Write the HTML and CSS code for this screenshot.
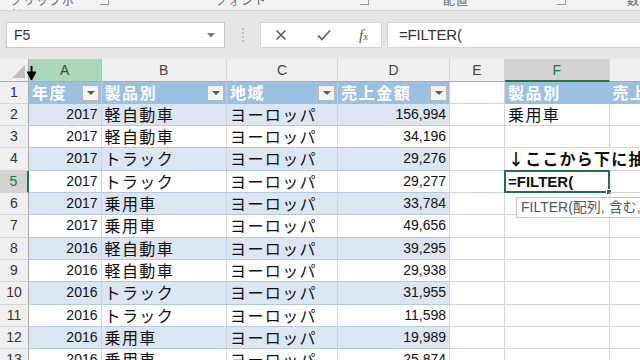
FILE: index.html
```html
<!DOCTYPE html>
<html lang="ja">
<head>
<meta charset="utf-8">
<link rel="stylesheet" href="styles.css">
</head>
<body>
<div class="ribbon">
  <span class="rl">クリップボード</span>
  <span class="rl"><span class="launch"></span></span>
  <span class="rl">フォント</span>
  <span class="rl"><span class="launch"></span></span>
  <span class="rl">配置</span>
  <span class="rl"><span class="launch"></span></span>
  <span class="rl">数</span>
</div>
<div class="fbar">
  <div class="namebox"><span>F5</span><svg class="dd" width="8" height="5" viewBox="0 0 8 5"><path d="M0 0h8L4 4.5z" fill="#777"/></svg></div>
  <div class="dots"><i></i><i></i><i></i><i></i></div>
  <div class="btns">
    <svg width="12" height="12" viewBox="0 0 12 12"><path d="M1.5 1.5l9 9M10.5 1.5l-9 9" stroke="#555" stroke-width="1.5"/></svg>
    <svg width="14" height="12" viewBox="0 0 14 12"><path d="M1 6.5l4 4L13 1.5" stroke="#666" stroke-width="1.8" fill="none"/></svg>
    <span class="fx">f<small>x</small></span>
  </div>
  <div class="finput">=FILTER(</div>
</div>
<div class="gap"></div>
<div class="sheetwrap">
<div class="sheet">
  <div class="corner"><span class="tri"></span></div>
  <div class="ch hov">A</div><div class="ch">B</div><div class="ch">C</div><div class="ch">D</div><div class="ch">E</div><div class="ch sel">F</div><div class="ch"></div>

  <div class="rh">1</div>
  <div class="c th">年度<span class="fb"></span></div><div class="c th">製品別<span class="fb"></span></div><div class="c th">地域<span class="fb"></span></div><div class="c th">売上金額<span class="fb"></span></div>
  <div class="c"></div><div class="c th2">製品別</div><div class="c th2">売上金額</div>

  <div class="rh">2</div>
  <div class="c t b num">2017</div><div class="c t b jp">軽自動車</div><div class="c t b jp">ヨーロッパ</div><div class="c t b num">156,994</div>
  <div class="c"></div><div class="c jp">乗用車</div><div class="c"></div>

  <div class="rh">3</div>
  <div class="c t num">2017</div><div class="c t jp">軽自動車</div><div class="c t jp">ヨーロッパ</div><div class="c t num">34,196</div>
  <div class="c"></div><div class="c"></div><div class="c"></div>

  <div class="rh">4</div>
  <div class="c t b num">2017</div><div class="c t b jp">トラック</div><div class="c t b jp">ヨーロッパ</div><div class="c t b num">29,276</div>
  <div class="c"></div><div class="c note">↓ここから下に抽出</div><div class="c"></div>

  <div class="rh rsel">5</div>
  <div class="c t num">2017</div><div class="c t jp">トラック</div><div class="c t jp">ヨーロッパ</div><div class="c t num">29,277</div>
  <div class="c"></div><div class="c active">=FILTER(<span class="selbox"><span class="handle"></span></span></div><div class="c"></div>

  <div class="rh">6</div>
  <div class="c t b num">2017</div><div class="c t b jp">乗用車</div><div class="c t b jp">ヨーロッパ</div><div class="c t b num">33,784</div>
  <div class="c"></div><div class="c"></div><div class="c"></div>

  <div class="rh">7</div>
  <div class="c t num">2017</div><div class="c t jp">乗用車</div><div class="c t jp">ヨーロッパ</div><div class="c t num">49,656</div>
  <div class="c"></div><div class="c"></div><div class="c"></div>

  <div class="rh">8</div>
  <div class="c t b num">2016</div><div class="c t b jp">軽自動車</div><div class="c t b jp">ヨーロッパ</div><div class="c t b num">39,295</div>
  <div class="c"></div><div class="c"></div><div class="c"></div>

  <div class="rh">9</div>
  <div class="c t num">2016</div><div class="c t jp">軽自動車</div><div class="c t jp">ヨーロッパ</div><div class="c t num">29,938</div>
  <div class="c"></div><div class="c"></div><div class="c"></div>

  <div class="rh">10</div>
  <div class="c t b num">2016</div><div class="c t b jp">トラック</div><div class="c t b jp">ヨーロッパ</div><div class="c t b num">31,955</div>
  <div class="c"></div><div class="c"></div><div class="c"></div>

  <div class="rh">11</div>
  <div class="c t num">2016</div><div class="c t jp">トラック</div><div class="c t jp">ヨーロッパ</div><div class="c t num">11,598</div>
  <div class="c"></div><div class="c"></div><div class="c"></div>

  <div class="rh">12</div>
  <div class="c t b num">2016</div><div class="c t b jp">乗用車</div><div class="c t b jp">ヨーロッパ</div><div class="c t b num">19,989</div>
  <div class="c"></div><div class="c"></div><div class="c"></div>

  <div class="rh">13</div>
  <div class="c t num">2016</div><div class="c t jp">乗用車</div><div class="c t jp">ヨーロッパ</div><div class="c t num">25,874</div>
  <div class="c"></div><div class="c"></div><div class="c"></div>
</div>
<svg class="cursor" width="9" height="14" viewBox="0 0 9 14"><path d="M4.5 0v9M1 6.5l3.5 6.5L8 6.5z" stroke="#000" stroke-width="2" fill="#000"/></svg>
<div class="tip">FILTER(配列, 含む, [空の場合])</div>
</div>
</body>
</html>
```

FILE: styles.css
```css
* { box-sizing: border-box; }
html, body { margin: 0; padding: 0; }
body {
  width: 640px; height: 360px; overflow: hidden;
  background: #e6e6e6;
  font-family: "Liberation Sans", Arial, sans-serif;
}
.ribbon {
  height: 11px;
  background: #f3f3f3;
  border-bottom: 1px solid #d4d4d4;
  overflow: hidden;
  display: grid;
  grid-template-columns: 90px 115px 145px 83px 114px 70px 1fr;
  padding-left: 10px;
}
.rl {
  font-family: "Noto Sans CJK JP", sans-serif;
  font-size: 12px; line-height: 14px;
  color: #6a6a6a;
  margin-top: -7px;
  letter-spacing: 1px;
}
.launch {
  display: inline-block; width: 9px; height: 9px;
  border-right: 1px solid #999; border-bottom: 1px solid #999;
  margin-top: 2px;
}
.fbar {
  height: 37px;
  display: flex;
  align-items: flex-end;
  padding-left: 6px;
}
.namebox {
  width: 219px; height: 26px;
  background: #fff;
  border: 1px solid #c8c8c8;
  display: flex; align-items: center; justify-content: space-between;
  padding: 0 9px 0 7px;
  font-size: 14px; color: #333;
}
.dots { width: 35px; height: 26px; display: flex; flex-direction: column; align-items: center; justify-content: center; gap: 2px; }
.dots i { width: 2px; height: 2px; background: #c0c0c0; display: block; }
.btns {
  width: 122px; height: 26px;
  background: #fff; border: 1px solid #d4d4d4;
  display: flex; align-items: center;
  padding-left: 14px; gap: 30px;
}
.fx {
  font-family: "Liberation Serif", serif; font-style: italic;
  font-size: 15px; color: #555; margin-left: -2px;
}
.fx small { font-size: 11px; }
.finput {
  flex: 1; height: 26px; margin-left: 5px;
  background: #fff; border: 1px solid #d4d4d4; border-right: 0;
  font-size: 15px; color: #333; padding-left: 11px; line-height: 24px;
  letter-spacing: -0.2px;
}
.gap { height: 11px; }
.sheetwrap { position: relative; background: #fff; height: 300px; }
.sheet {
  display: grid;
  grid-template-columns: 29px 72.5px 125.5px 111px 112px 55px 104.5px 1fr;
  grid-template-rows: 22.5px repeat(13, 22.33px);
  background: #fff;
}
.corner { background: #efefef; border-right: 1px solid #ababab; border-bottom: 1px solid #ababab; position: relative; }
.tri {
  position: absolute; right: 3px; bottom: 3px;
  width: 0; height: 0;
  border-left: 13px solid transparent; border-bottom: 13px solid #c0c0c0;
}
.ch {
  background: #efefef;
  border-right: 1px solid #d4d4d4; border-bottom: 1px solid #ababab;
  text-align: center; font-size: 14px; color: #444; line-height: 22px;
}
.ch.hov { background: #a9d8bb; border-right-color: #9cc9ab; }
.ch.sel { background: #d3d3d3; color: #217346; border-bottom: 2px solid #217346; }
.rh {
  background: #efefef;
  border-right: 1px solid #ababab; border-bottom: 1px solid #d4d4d4;
  text-align: center; font-size: 14px; color: #333; line-height: 21px;
}
.rh.rsel { background: #d3d3d3; color: #217346; border-right: 2px solid #217346; }
.c {
  border-right: 1px solid #d4d4d4; border-bottom: 1px solid #d4d4d4;
  font-size: 14px; color: #111; line-height: 21px;
  white-space: nowrap; padding: 0 3px;
  position: relative;
}
.c.t { border-bottom-color: #b4c8e2; }
.c.b { background: #dce6f2; border-right-color: #c6d4e6; }
.num { text-align: right; padding-right: 3px; }
.jp {
  font-family: "Noto Sans CJK JP", sans-serif;
  font-size: 16px; letter-spacing: 1.4px; line-height: 21px;
}
.th, .th2 {
  background: #9cc0e2;
  border-right-color: #b9d1ea; border-bottom-color: #9cc0e2;
  color: #fff; font-weight: bold;
  font-family: "Noto Sans CJK JP", sans-serif;
  font-size: 16px; letter-spacing: 1.6px; line-height: 21px;
}
.th2 { border-right: 0; }
.fb {
  position: absolute; right: 2px; top: 3px;
  width: 17px; height: 16px;
  background: #f4f4f4; border: 1px solid #b8b8b8;
}
.fb::after {
  content: ""; position: absolute; left: 4px; top: 5px;
  border-left: 4px solid transparent; border-right: 4px solid transparent;
  border-top: 4px solid #595959;
}
.note {
  font-family: "Noto Sans CJK JP", sans-serif;
  font-weight: bold; font-size: 16px; letter-spacing: 1.2px;
  overflow: visible; border-right: 0;
}
.active { font-size: 15px; font-weight: bold; color: #111; }
.selbox {
  position: absolute; left: -1px; top: -1px; right: -1px; bottom: -1px;
  border: 2px solid #217346;
}
.handle {
  position: absolute; right: -4px; bottom: -4px;
  width: 6px; height: 6px; background: #217346; border: 1px solid #fff;
}
.cursor { position: absolute; left: 27px; top: 7px; }
.tip {
  position: absolute; left: 516px; top: 138px;
  height: 21px; width: 180px;
  background: #fff; border: 1px solid #c6c6c6;
  font-family: "Liberation Sans", "Noto Sans CJK JP", sans-serif;
  font-size: 14px; color: #555; line-height: 19px;
  padding-left: 4px; white-space: nowrap;
}
```
